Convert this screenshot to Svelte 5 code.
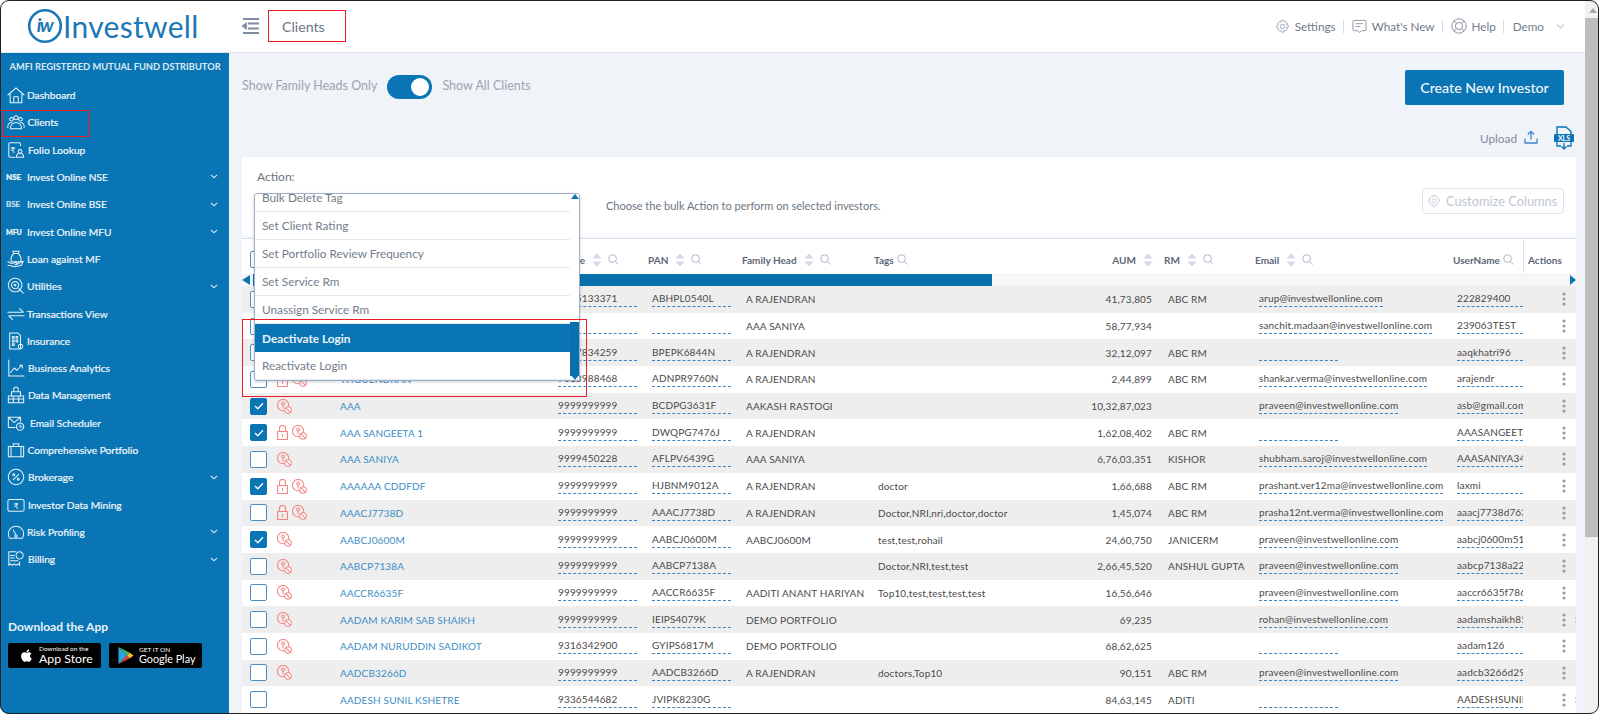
<script>
  const nav = [
    { t: 'Dashboard', i: 'home' },
    { t: 'Clients', i: 'clients', x: 0.5, box: true },
    { t: 'Folio Lookup', i: 'folio', x: 1 },
    { t: 'Invest Online NSE', b: 'NSE', c: true },
    { t: 'Invest Online BSE', b: 'BSE', c: true, thin: true },
    { t: 'Invest Online MFU', b: 'MFU', c: true, small: true },
    { t: 'Loan against MF', i: 'loan' },
    { t: 'Utilities', i: 'util', c: true },
    { t: 'Transactions View', i: 'trans' },
    { t: 'Insurance', i: 'ins' },
    { t: 'Business Analytics', i: 'chart', x: 1 },
    { t: 'Data Management', i: 'data', x: 1 },
    { t: 'Email Scheduler', i: 'mail', x: 3 },
    { t: 'Comprehensive Portfolio', i: 'case', x: 0.5 },
    { t: 'Brokerage', i: 'pct', x: 1, c: true },
    { t: 'Investor Data Mining', i: 'mine', x: 1 },
    { t: 'Risk Profiling', i: 'risk', c: true },
    { t: 'Billing', i: 'bill', x: 1, c: true }
  ];
  const icons = {
    home: 'M1 10 10 2l9 8M3.500 8v10.500h13V8M7.500 18.500V12h5v6.500',
    clients: 'M10 3a2.300 2.300 0 1 0 .01 0M5 5a2 2 0 1 0 .01 0M15 5a2 2 0 1 0 .01 0M1 16.500c-.5-3.500 1-6 4-6M19 16.500c.5-3.500-1-6-4-6M4 17.500c-.5-4 2-7 6-7s6.500 3 6 7Z',
    folio: 'M15 5V3.500A1.500 1.500 0 0 0 13.500 2h-10A1.500 1.500 0 0 0 2 3.500v13A1.500 1.500 0 0 0 3.500 18H9M14.500 9.500a2 2 0 1 0 .01 0M10.500 18c0-3 1.500-4.500 4-4.500s4 1.500 4 4.500Z',
    loan: 'M7.500 4 6.500 1.500h7L12.500 4ZM7.500 4C4 7 3.500 12 5.500 13h9c2-1 1.500-6-2-9ZM1 13l4 2 5-1 2 1.500-3 1M12 15l6-2.500-2 4.500-7 1.500L1 17',
    util: 'M9 1.500a7.500 7.500 0 1 0 .01 0M9 5a4 4 0 1 0 .01 0M9 8a1 1 0 1 0 .01 0M13 13l5 5',
    trans: 'M1 8h17L14 4M19 12H2l4 4',
    ins: 'M3 1h9l3 3v15H3ZM6 5h2v2H6ZM10 5h2v2h-2ZM6 9h2v2H6ZM10 9h2v2h-2ZM6 13h2v2H6ZM15 13.500a2.500 2.500 0 1 0 .01 0',
    chart: 'M2 1v18h17M4 15l4-5 3 2.500 5-5M14 7h3v3',
    data: 'M7.500 3.500a2 2 0 1 1 5 0v3h-5ZM5 6.500h10V11H5ZM1.500 11h17v7.500h-17ZM7 11v7.500M13 11v7.500M1.500 14.500h17',
    mail: 'M15 8V3.500H1.500V15H9M1.500 3.500 8 9.500l7-6M14.500 10a4 4 0 1 0 .01 0M14.500 12v2.500h2',
    case: 'M1.500 6h17v11.500h-17ZM7 6V3h6v3M4.500 6v11.500M15.500 6v11.500',
    pct: 'M10 1.500a8.500 8.500 0 1 0 .01 0M13 7l-6 6M7.500 6.500a1 1 0 1 0 .01 0M12.500 11.500a1 1 0 1 0 .01 0',
    mine: 'M3 4h14a2 2 0 0 1 2 2v9a2 2 0 0 1-2 2H3a2 2 0 0 1-2-2V6a2 2 0 0 1 2-2Z',
    risk: 'M3 17a8.500 8.500 0 1 1 14 0ZM7 8l3 5M10 13a1.300 1.300 0 1 0 .01 0',
    bill: 'M2 2h8M2 2v15l2-1.500 2 1.500 2-1.500 2 1.500 2-1.500 2 1.500V13M4 6h4M4 9h4M4 12h8M14 2a4 4 0 1 0 .01 0'
  };
  const iconText = { folio: '₹', mine: '₹' };
  const P = 'praveen@investwellonline.com';
  const rows = [
    [0,0,0,'ARUP BANERJEE','9845133371','ABHPL0540L','A RAJENDRAN','','41,73,805','ABC RM','arup@investwellonline.com','222829400'],
    [0,0,0,'SANCHIT MADAAN','','','AAA SANIYA','','58,77,934','','sanchit.madaan@investwellonline.com','239063TEST'],
    [0,0,0,'AAQ KHATRI','9817834259','BPEPK6844N','A RAJENDRAN','','32,12,097','ABC RM','','aaqkhatri96'],
    [0,1,1,'THGUENDRAN','7013988468','ADNPR9760N','A RAJENDRAN','','2,44,899','ABC RM','shankar.verma@investwellonline.com','arajendr'],
    [1,0,1,'AAA','9999999999','BCDPG3631F','AAKASH RASTOGI','','10,32,87,023','',P,'asb@gmail.com'],
    [1,1,1,'AAA SANGEETA 1','9999999999','DWQPG7476J','A RAJENDRAN','','1,62,08,402','ABC RM','','AAASANGEETA1'],
    [0,0,1,'AAA SANIYA','9999450228','AFLPV6439G','AAA SANIYA','','6,76,03,351','KISHOR','shubham.saroj@investwellonline.com','AAASANIYA3456'],
    [1,1,1,'AAAAAA CDDFDF','9999999999','HJBNM9012A','A RAJENDRAN','doctor','1,66,688','ABC RM','prashant.ver12ma@investwellonline.com','laxmi'],
    [0,1,1,'AAACJ7738D','9999999999','AAACJ7738D','A RAJENDRAN','Doctor,NRI,nri,doctor,doctor','1,45,074','ABC RM','prasha12nt.verma@investwellonline.com','aaacj7738d763'],
    [1,0,1,'AABCJ0600M','9999999999','AABCJ0600M','AABCJ0600M','test,test,rohail','24,60,750','JANICERM',P,'aabcj0600m51'],
    [0,0,1,'AABCP7138A','9999999999','AABCP7138A','','Doctor,NRI,test,test','2,66,45,520','ANSHUL GUPTA',P,'aabcp7138a22'],
    [0,0,1,'AACCR6635F','9999999999','AACCR6635F','AADITI ANANT HARIYAN','Top10,test,test,test,test','16,56,646','',P,'aaccr6635f786'],
    [0,0,1,'AADAM KARIM SAB SHAIKH','9999999999','IEIPS4079K','DEMO PORTFOLIO','','69,235','','rohan@investwellonline.com','aadamshaikh85'],
    [0,0,1,'AADAM NURUDDIN SADIKOT','9316342900','GYIPS6817M','DEMO PORTFOLIO','','68,62,625','','','aadam126'],
    [0,0,1,'AADCB3266D','9999999999','AADCB3266D','A RAJENDRAN','doctors,Top10','90,151','ABC RM',P,'aadcb3266d29'],
    [0,0,0,'AADESH SUNIL KSHETRE','9336544682','JVIPK8230G','','','84,63,145','ADITI','','AADESHSUNIL']
  ];
  const menu = ['Bulk Delete Tag','Set Client Rating','Set Portfolio Review Frequency','Set Service Rm','Unassign Service Rm','Deactivate Login','Reactivate Login'];
</script>

{#snippet sort()}
  <svg class="sort" viewBox="0 0 10 15" width="10" height="14"><path d="M5 0.500 10 6H0ZM5 14.500 0 9h10Z" fill="#d3dae5" /></svg>
{/snippet}
{#snippet search()}
  <svg class="search" viewBox="0 0 12 12" width="11" height="11" fill="none" stroke="#a5afc0" stroke-width="1"><circle cx="5" cy="5" r="4.200" /><path d="m8 8 3.500 3.500" /></svg>
{/snippet}
{#snippet gear(size, color)}
  <svg viewBox="0 0 20 20" width={size} height={size} fill="none" stroke={color} stroke-width="1.200"><circle cx="10" cy="10" r="3" /><path d="M8.500 1.500h3l.5 2.500 2-.9 2.200 2.200-1 2 2.300.8v3l-2.300.8 1 2-2.200 2.200-2-1-.5 2.400h-3l-.7-2.400-2 1-2.100-2.200 1-2-2.200-.8V8.400l2.200-.8-1-2 2.100-2.200 2 1Z" /></svg>
{/snippet}
{#snippet dots()}
  <svg class="dots" viewBox="0 0 4 14" width="4" height="14" fill="#9c9c9c"><circle cx="2" cy="2" r="1.600" /><circle cx="2" cy="7" r="1.600" /><circle cx="2" cy="12" r="1.600" /></svg>
{/snippet}

<div class="page">
  <div class="window">
    <header class="topbar">
      <div class="logo">
        <svg viewBox="0 0 36 36" width="36" height="36"><circle cx="18" cy="18" r="15.800" fill="none" stroke="#1b77b6" stroke-width="2.600" /><text x="17.500" y="24" text-anchor="middle" class="logo-mark">iw</text></svg>
        <span class="logo-text">Investwell</span>
      </div>
      <svg class="burger" viewBox="0 0 17 16" width="17" height="16" fill="none" stroke="#7f8ba0" stroke-width="1.800"><path d="M1 1h16M6 5.500h11M1 8l3-2.200v4.400ZM6 10.500h11M1 15h16" /></svg>
      <div class="page-title">Clients</div>
      <nav class="toplinks">
        <span class="tl">{@render gear(15, '#9aa3b4')}Settings</span>
        <i class="vsep"></i>
        <span class="tl"><svg viewBox="0 0 16 16" width="15" height="15" fill="none" stroke="#8b95a8" stroke-width="1"><path d="M2 1.500h12a1 1 0 0 1 1 1v9a1 1 0 0 1-1 1h-4l-2 2-2-2H2a1 1 0 0 1-1-1v-9a1 1 0 0 1 1-1ZM4 5h8M4 8h5" /></svg>What's New</span>
        <i class="vsep"></i>
        <span class="tl"><svg viewBox="0 0 16 16" width="16" height="16" fill="none" stroke="#8b95a8" stroke-width="1"><circle cx="8" cy="8" r="7.200" /><circle cx="8" cy="8" r="3.600" /><path d="m3 3 2.500 2.500M13 3l-2.500 2.500M3 13l2.500-2.500M13 13l-2.500-2.500" /></svg>Help</span>
        <i class="vsep"></i>
        <span class="tl demo">Demo</span>
        <svg class="demo-chev" viewBox="0 0 10 6" width="9" height="5" fill="none" stroke="#8b95a8" stroke-width="1"><path d="m1 1 4 3.500L9 1" /></svg>
      </nav>
    </header>

    <div class="body">
      <aside class="sidebar">
        <div class="amfi">AMFI REGISTERED MUTUAL FUND DSTRIBUTOR</div>
        <ul class="nav">
          {#each nav as n}
            <li class="nav-item" class:boxed={n.box}>
              {#if n.b}
                <span class="badge" class:thin={n.thin} class:small={n.small}>{n.b}</span>
              {:else}
                <svg class="nav-icon" viewBox="0 0 20 20" width="18" height="18" fill="none" stroke="#e6f1f8" stroke-width="1.150" stroke-linecap="round" stroke-linejoin="round"><path d={icons[n.i]} />{#if iconText[n.i]}<text x={n.i === 'mine' ? 10 : 6.500} y={n.i === 'mine' ? 14.500 : 13} text-anchor="middle" class="icon-text">{iconText[n.i]}</text>{/if}</svg>
              {/if}
              <span class="nav-label" style:margin-left={`${n.x || 0}px`}>{n.t}</span>
              {#if n.c}
                <svg class="chev" viewBox="0 0 10 6" width="8" height="5" fill="none" stroke="#d5e6f2" stroke-width="1.300"><path d="m1 1 4 3.500L9 1" /></svg>
              {/if}
            </li>
          {/each}
        </ul>
        <div class="dl">Download the App</div>
        <div class="stores">
          <div class="store">
            <svg viewBox="0 0 24 24" width="17" height="17" fill="#fff"><path d="M17.050 20.280c-.98.950-2.050.800-3.080.350-1.090-.460-2.090-.480-3.240 0-1.440.620-2.200.440-3.060-.350C2.790 15.250 3.510 7.590 9.050 7.310c1.350.070 2.290.740 3.080.800 1.180-.240 2.310-.930 3.570-.840 1.510.120 2.650.720 3.400 1.800-3.120 1.870-2.380 5.980.480 7.130-.570 1.500-1.310 2.990-2.540 4.090zM12.030 7.250c-.150-2.230 1.660-4.070 3.740-4.250.290 2.580-2.340 4.500-3.740 4.250z" /></svg>
            <div class="store-t"><small>Download on the</small><b>App Store</b></div>
          </div>
          <div class="store gp">
            <svg viewBox="0 0 16 18" width="16" height="17"><path d="M0 0v18l9-9Z" fill="#26a6e0" /><path d="m0 0 9 9 3-3Z" fill="#3fb66b" /><path d="m0 18 9-9 3 3Z" fill="#e8413d" /><path d="m12 6-3 3 3 3 4-3Z" fill="#fbc02d" /></svg>
            <div class="store-t"><small>GET IT ON</small><b>Google Play</b></div>
          </div>
        </div>
      </aside>

      <main class="main">
        <div class="toprow">
          <span class="tog-label">Show Family Heads Only</span>
          <span class="toggle"><i></i></span>
          <span class="tog-label">Show All Clients</span>
          <button class="create">Create New Investor</button>
        </div>
        <div class="uploadrow">
          <span class="upload">Upload</span>
          <svg class="up-ico" viewBox="0 0 14 14" width="14" height="14" fill="none" stroke="#3f88d0" stroke-width="1.300"><path d="M7 9.500V1.500M3.800 4.500 7 1.300l3.200 3.200M1 8.500V13h12V8.500" /></svg>
          <svg class="xls" viewBox="0 0 20 24" width="20" height="24"><path d="M3 9V1h9l5 4.500V9" fill="none" stroke="#0c73b6" stroke-width="1.400" /><rect x="0" y="8" width="20" height="8" fill="#0c73b6" rx="1" /><text x="10" y="14.800" text-anchor="middle" class="xls-t">XLS</text><path d="M3 16v4h4M17 16v4h-4M10 17v6M7.500 20.500 10 23l2.500-2.500" fill="none" stroke="#0c73b6" stroke-width="1.300" /></svg>
        </div>

        <section class="card">
          <div class="actions">
            <div class="action-label">Action:</div>
            <div class="action-note">Choose the bulk Action to perform on selected investors.</div>
            <button class="customize">{@render gear(14, '#c3cad6')}Customize Columns</button>
          </div>

          <div class="thead grid">
            <div class="th"><span class="cb head-cb"></span></div>
            <div class="th"></div>
            <div class="th">Name {@render sort()}{@render search()}</div>
            <div class="th th-mobile">Mobile {@render sort()}{@render search()}</div>
            <div class="th">PAN {@render sort()}{@render search()}</div>
            <div class="th">Family Head {@render sort()}{@render search()}</div>
            <div class="th tight">Tags {@render search()}</div>
            <div class="th th-aum">AUM {@render sort()}</div>
            <div class="th th-rm">RM {@render sort()}{@render search()}</div>
            <div class="th">Email {@render sort()}{@render search()}</div>
            <div class="th tight">UserName {@render search()}</div>
            <div class="th th-act">Actions</div>
          </div>

          <div class="hscroll">
            <i class="arrow-l"></i>
            <div class="hthumb"></div>
            <i class="arrow-r"></i>
          </div>

          <div class="tbody">
            {#each rows as r, idx}
              <div class="tr grid" class:odd={idx % 2 === 0}>
                <div class="td"><span class="cb" class:on={r[0]}>{#if r[0]}<svg viewBox="0 0 12 10" width="10" height="8" fill="none" stroke="#fff" stroke-width="1.700"><path d="m1 5 3.500 3.500L11 1.500" /></svg>{/if}</span></div>
                <div class="td ico">
                  {#if r[1]}<svg viewBox="0 0 11 15" width="11" height="15" fill="none" stroke="#f58585" stroke-width="1.100"><path d="M2.500 6.500V3.500a3 3 0 0 1 6 0v3M.6 6.500h9.800v8H.6ZM5.500 9v3" /></svg>{/if}
                  {#if r[2]}<svg class="key" viewBox="0 0 16 16" width="15" height="15" fill="none" stroke="#f58585" stroke-width="1.100"><circle cx="6.500" cy="6.500" r="6" /><circle cx="6.500" cy="4.800" r="1.500" /><path d="M6.500 6.300V10" /><circle cx="11.800" cy="11.800" r="3.500" fill="#fff" /><path d="m9.500 9.500 4.600 4.600" /></svg>{/if}
                </div>
                <div class="td"><span class="link">{r[3]}</span></div>
                <div class="td"><span class="dash fixed">{r[4]}</span></div>
                <div class="td"><span class="dash fixed">{r[5]}</span></div>
                <div class="td plain">{r[6]}</div>
                <div class="td plain">{r[7]}</div>
                <div class="td num">{r[8]}</div>
                <div class="td plain rm">{r[9]}</div>
                <div class="td"><span class="dash auto" class:fixed={!r[10]}>{r[10]}</span></div>
                <div class="td"><span class="dash user">{r[11]}</span></div>
                <div class="td dots-cell">
                  {@render dots()}
                  {#if idx === 12 || idx === 15}<i class="stray"></i>{/if}
                </div>
              </div>
            {/each}
          </div>

          <div class="dropdown">
            <ul>
              {#each menu as m, i}
                <li class:active={i === 5}>{m}</li>
              {/each}
            </ul>
            <div class="dd-scroll">
              <i class="up"></i>
              <div class="dd-thumb"></div>
              <i class="down"></i>
            </div>
          </div>
          <div class="redbox"></div>
        </section>
      </main>
    </div>
  </div>

  <div class="vscroll">
    <i class="vs-up"></i>
    <div class="vs-thumb"></div>
  </div>

  <div class="frame"></div>
</div>

<style>
  :global(body) { margin: 0; background: #fff; }
  * { box-sizing: border-box; }
  ul { list-style: none; margin: 0; padding: 0; }
  .page { width: 1600px; height: 716px; position: relative; overflow: hidden; display: flex; font-family: Lato, "Open Sans", sans-serif; color: #444; }
  .window { width: 1585px; display: flex; flex-direction: column; }
  .vscroll { width: 15px; background: #f1f1f1; display: flex; flex-direction: column; align-items: center; }
  .vs-up { margin-top: 8px; margin-bottom: 5px; border: 4px solid transparent; border-bottom: 5px solid #a8a8a8; border-top: 0; }
  .vs-thumb { width: 100%; height: 519px; background: #bdbdbd; }

  .topbar { height: 53px; flex: none; background: #fff; border-bottom: 1px solid #e1e5ec; display: flex; align-items: center; position: relative; }
  .logo { display: flex; align-items: center; margin-left: 27px; width: 215px; }
  .logo-mark { font: italic 700 19px Lato, sans-serif; fill: #1b77b6; letter-spacing: -1.500px; }
  .logo-text { font-size: 30px; font-weight: 400; color: #1b77b6; line-height: 1; letter-spacing: .3px; }
  .burger { flex: none; }
  .page-title { width: 78px; height: 32px; margin-left: 9px; border: 1.500px solid #ee1c25; display: flex; align-items: center; padding-left: 13px; font-size: 14.200px; color: #6d7583; }
  .toplinks { margin-left: auto; display: flex; align-items: center; color: #727b8d; font-size: 11.700px; padding-right: 20px; }
  .tl { display: flex; align-items: center; gap: 5px; }
  .vsep { width: 1px; height: 13px; background: #d5d9e1; margin: 0 7.500px; }
  .demo { margin-left: 1px; }
  .demo-chev { margin-left: 12px; }

  .body { flex: 1; display: flex; min-height: 0; }
  .sidebar { width: 229px; flex: none; background: #0a75b5; color: #f1f7fb; padding-top: 8px; }
  .amfi { font-size: 9.300px; font-weight: 700; color: #dce9f3; padding-left: 9.500px; line-height: 12px; white-space: nowrap; }
  .nav { margin-top: 8.500px; }
  .nav-item { height: 27.300px; display: flex; align-items: center; padding-left: 7px; position: relative; font-size: 10.200px; font-weight: 400; white-space: nowrap; -webkit-text-stroke: .2px #f1f7fb; }
  .nav-item.boxed::after { content: ''; position: absolute; left: 2px; top: 1px; width: 85px; height: 25px; border: 1.500px solid #ee1c25; }
  .nav-icon { width: 18px; flex: none; }
  .nav-label { padding-left: 2px; }
  .badge { width: 19px; flex: none; font-size: 8px; font-weight: 900; color: #e6f0f7; margin-left: -1px; }
  .badge.thin { font-weight: 400; }
  .badge.small { font-size: 7px; }
  .chev { position: absolute; right: 11px; top: 11px; }
  .dl { font-size: 12px; font-weight: 700; margin: 46.500px 0 0 8px; line-height: 16px; color: #e9f2f9; white-space: nowrap; }
  .stores { display: flex; gap: 8px; margin: 8px 0 0 8px; }
  .store { width: 93px; height: 25px; background: #000; border-radius: 2px; display: flex; align-items: center; padding-left: 10px; gap: 4px; color: #fff; }
  .store.gp { padding-left: 9px; gap: 5px; }
  .store-t { display: flex; flex-direction: column; line-height: 1; }
  .store-t small { font-size: 6.500px; font-weight: 400; white-space: nowrap; }
  .store-t b { font-size: 12.300px; font-weight: 400; margin-top: 1px; white-space: nowrap; }
  .store.gp b { font-size: 10.800px; }
  .icon-text { font: 400 9px "DejaVu Sans", sans-serif; fill: #e6f1f8; stroke: none; }

  .main { flex: 1; background: #f0f3f8; padding: 17px 9px 0 13px; min-width: 0; }
  .toprow { display: flex; align-items: center; height: 35px; padding-right: 12px; }
  .tog-label { font-size: 12.500px; color: #9ba4b3; white-space: nowrap; margin-bottom: 4px; }
  .toggle { width: 45px; height: 24px; border-radius: 12px; background: #0a75b5; margin: 0 10px 1px; position: relative; flex: none; }
  .toggle i { position: absolute; right: 3px; top: 3px; width: 18px; height: 18px; border-radius: 50%; background: #fff; }
  .create { margin-left: auto; width: 159px; height: 35px; background: #0a75b5; color: #f2f7fb; border: 0; border-radius: 2px; font: 500 14.200px Lato, sans-serif; padding: 0; }
  .uploadrow { height: 23px; margin-top: 21px; display: flex; align-items: center; justify-content: flex-end; padding-right: 2px; gap: 0; }
  .upload { font-size: 11.800px; color: #828c9e; margin-right: 7px; margin-top: 1px; }
  .up-ico { margin-bottom: 2px; }
  .xls { margin-left: 16px; }
  .xls-t { font: 700 7px Lato, sans-serif; fill: #fff; }

  .card { background: #fff; margin-top: 8px; position: relative; }
  .actions { height: 82px; position: relative; border-bottom: 1px solid #d7dcea; box-shadow: inset 0 -6px 6px -6px #eef0f4; }
  .action-label { position: absolute; left: 15px; top: 12px; font-size: 12px; color: #6d7583; }
  .action-note { position: absolute; left: 364px; top: 42px; font-size: 11px; color: #6d7583; white-space: nowrap; }
  .customize { position: absolute; right: 12px; top: 31px; width: 142px; height: 26px; background: #fff; border: 1px solid #dde3ee; border-radius: 4px; color: #c0c6d2; font: 400 12.800px Lato, sans-serif; display: flex; align-items: center; gap: 5px; padding: 0 0 0 4px; white-space: nowrap; }

  .grid { display: grid; grid-template-columns: 35px 59px 218px 94px 94px 132px 200px 79px 102px 198px 70px 53px; }
  .thead { height: 35px; align-items: center; }
  .th { font-size: 10px; font-weight: 700; color: #5d6678; display: flex; align-items: center; gap: 5px; white-space: nowrap; height: 100%; padding-top: 6px; }
  .th.tight { gap: 3px; }
  .th.tight .search { margin-left: 0; }
  .sort { flex: none; margin-left: 2px; }
  .search { flex: none; margin-left: 1px; }
  .th-mobile { justify-content: flex-end; padding-right: 29px; }
  .th-aum { justify-content: flex-end; }
  .th-rm { padding-left: 11px; }
  .th-act { border-left: 1px solid #dbdfe7; padding-left: 4px; height: 33px; }
  .head-cb { margin-left: 8px; }

  .hscroll { height: 12px; background: #f7f7f7; position: relative; box-shadow: inset 0 1px 0 #eee; }
  .hthumb { position: absolute; left: 11px; top: 0; width: 739px; height: 100%; background: #0a6fad; }
  .arrow-l { position: absolute; left: 0; top: 1px; border: 5.500px solid transparent; border-left: 0; border-right: 8px solid #0a75b5; }
  .arrow-r { position: absolute; right: 0; top: 1px; border: 5.500px solid transparent; border-right: 0; border-left: 6px solid #0a75b5; }

  .tr { height: 26.700px; align-items: center; background: #fff; }
  .tr.odd { background: #eeeeee; }
  .td { font-size: 10px; color: #4a4a4a; padding-left: 4px; white-space: nowrap; min-width: 0; letter-spacing: .15px; }
  .td:first-child { padding-left: 8px; height: 100%; display: flex; align-items: center; }
  .cb { display: flex; align-items: center; justify-content: center; width: 17px; height: 17px; border: 1.500px solid #4f8fc0; border-radius: 2px; background: #fff; flex: none; }
  .cb.on { background: #0a75b5; border-color: #0a75b5; }
  .ico { padding-left: 0; display: flex; align-items: center; gap: 4px; height: 100%; }
  .link { color: #3c8dc4; }
  .dash { display: block; border-bottom: 1px dashed #3b86c6; height: 16px; line-height: 14px; }
  .dash.fixed { width: 79px; }
  .dash.auto:not(.fixed) { width: max-content; }
  .dash.user { width: 66px; overflow: hidden; }
  .num { text-align: right; padding-left: 0; padding-right: 1px; }
  .rm { padding-left: 15px; }
  .dots-cell { padding-left: 39px; display: flex; align-items: center; position: relative; }
  .stray { position: absolute; right: 0; top: 4px; width: 1px; height: 6px; border-top: 2px solid #ccd3d8; border-bottom: 2px solid #ccd3d8; }

  .dropdown { position: absolute; left: 12px; top: 35.500px; width: 326px; height: 188.500px; background: #fff; border: 1px solid #9eb0c8; border-radius: 3px; overflow: hidden; box-shadow: 0 1px 3px rgba(60, 70, 90, .25); z-index: 2; }
  .dropdown ul { margin-top: -9.500px; }
  .dropdown li { height: 28px; padding-left: 7px; display: flex; align-items: center; font-size: 11.800px; color: #737d8c; border-bottom: 1px solid #e4e9f2; white-space: nowrap; }
  .dropdown li.active { background: #0a75b5; color: #eef5fa; font-weight: 700; border-bottom: 0; }
  .dd-scroll { position: absolute; right: 0; top: 0; bottom: 0; width: 9px; background: #fff; }
  .dd-thumb { position: absolute; left: 0; top: 128px; width: 9px; height: 54px; background: #0a6fad; }
  .up { position: absolute; left: .5px; top: 0; border: 4px solid transparent; border-top: 0; border-bottom: 5px solid #0a75b5; }
  .down { position: absolute; left: .5px; bottom: 0; border: 4px solid transparent; border-bottom: 0; border-top: 5px solid #0a75b5; }
  .redbox { position: absolute; left: 0; top: 162px; width: 345px; height: 78px; border: 1.500px solid #ee1c25; z-index: 3; pointer-events: none; }
  .frame { position: absolute; left: 0; top: 0; width: 1599px; height: 714px; border: 1.500px solid #222; border-radius: 9px; box-shadow: 0 0 0 12px #fff; z-index: 5; pointer-events: none; }
</style>
